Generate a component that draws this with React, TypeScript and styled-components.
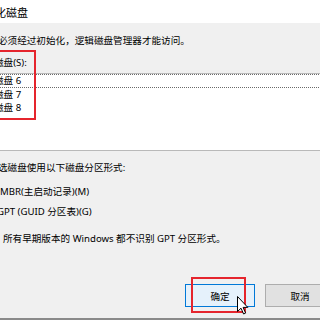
import React from "react";
import styled, { createGlobalStyle } from "styled-components";

const Global = createGlobalStyle`
  html, body { margin: 0; padding: 0; background: #f0f0f0; }
  body { overflow: hidden; }
`;

const Page = styled.div`
  position: relative;
  width: 320px;
  height: 320px;
  overflow: hidden;
  display: flex;
  flex-direction: column;
  background: #f0f0f0;
  font-family: "Noto Sans", "Noto Sans CJK SC", sans-serif;
  font-size: 9.6px;
  color: #000;
`;

const TitleBar = styled.div`
  height: 23px;
  flex: none;
  background: #fff;
  display: flex;
  align-items: center;
  font-size: 11px;
`;

const TitleText = styled.span`
  margin-left: -5px;
  white-space: nowrap;
`;

const Body = styled.div`
  flex: 1;
  display: flex;
  flex-direction: column;
`;

const Line = styled.div<{ $indent: number; $top: number }>`
  height: 13px;
  line-height: 13px;
  margin-top: ${(p) => p.$top}px;
  margin-left: ${(p) => p.$indent}px;
  white-space: nowrap;
`;

const ListBox = styled.div`
  margin: 4px -10px 0 -10px;
  height: 78px;
  box-sizing: border-box;
  background: #fff;
  border: 1px solid #b9b9b9;
  display: flex;
  flex-direction: column;
`;

const ListItem = styled.div<{ $focused?: boolean }>`
  box-sizing: border-box;
  height: ${(p) => (p.$focused ? 14 : 13)}px;
  line-height: ${(p) => (p.$focused ? 12 : 13)}px;
  padding-left: ${(p) => (p.$focused ? 2 : 3)}px;
  border: ${(p) => (p.$focused ? "1px dotted #6a6a6a" : "none")};
  white-space: nowrap;
`;

const ButtonRow = styled.div`
  display: flex;
  justify-content: flex-end;
  gap: 10px;
  margin-top: 39px;
  margin-right: -15px;
`;

const Button = styled.div<{ $primary?: boolean }>`
  width: 70px;
  height: 23px;
  box-sizing: border-box;
  display: flex;
  align-items: center;
  justify-content: center;
  border: 1px solid ${(p) => (p.$primary ? "#0078d7" : "#adadad")};
  background: ${(p) => (p.$primary ? "#e5f1fb" : "#e1e1e1")};
`;

const BottomEdge = styled.div`
  flex: none;
  height: 2px;
  background: #8a8a8a;
`;

const Highlight = styled.div<{ $l: number; $t: number; $w: number; $h: number }>`
  position: absolute;
  left: ${(p) => p.$l}px;
  top: ${(p) => p.$t}px;
  width: ${(p) => p.$w}px;
  height: ${(p) => p.$h}px;
  box-sizing: border-box;
  border: 2px solid #e5252d;
  pointer-events: none;
`;

const Cursor = styled.svg`
  position: absolute;
  left: 237px;
  top: 296px;
`;

export default function App() {
  return (
    <Page>
      <Global />
      <TitleBar>
        <TitleText>化磁盘</TitleText>
      </TitleBar>
      <Body>
        <Line $indent={-2} $top={11}>必须经过初始化，逻辑磁盘管理器才能访问。</Line>
        <Line $indent={-6} $top={9}>磁盘(S):</Line>
        <ListBox>
          <ListItem $focused>磁盘 6</ListItem>
          <ListItem>磁盘 7</ListItem>
          <ListItem>磁盘 8</ListItem>
        </ListBox>
        <Line $indent={-2} $top={10}>选磁盘使用以下磁盘分区形式:</Line>
        <Line $indent={0} $top={11}>MBR(主启动记录)(M)</Line>
        <Line $indent={-3} $top={7}>GPT (GUID 分区表)(G)</Line>
        <Line $indent={3} $top={14}>所有早期版本的 Windows 都不识别 GPT 分区形式。</Line>
        <ButtonRow>
          <Button $primary>确定</Button>
          <Button>取消</Button>
        </ButtonRow>
      </Body>
      <BottomEdge />
      <Highlight $l={-4} $t={50} $w={40} $h={70} />
      <Highlight $l={191} $t={277} $w={55} $h={36} />
      <Cursor width="12" height="19" viewBox="0 0 12 19">
        <path
          d="M0.5 0.5 L0.5 15.5 L4 12.2 L6.6 18 L8.6 17.1 L6.1 11.4 L10.8 11.4 Z"
          fill="#fff"
          stroke="#000"
          strokeWidth="1"
          strokeLinejoin="round"
        />
      </Cursor>
    </Page>
  );
}
